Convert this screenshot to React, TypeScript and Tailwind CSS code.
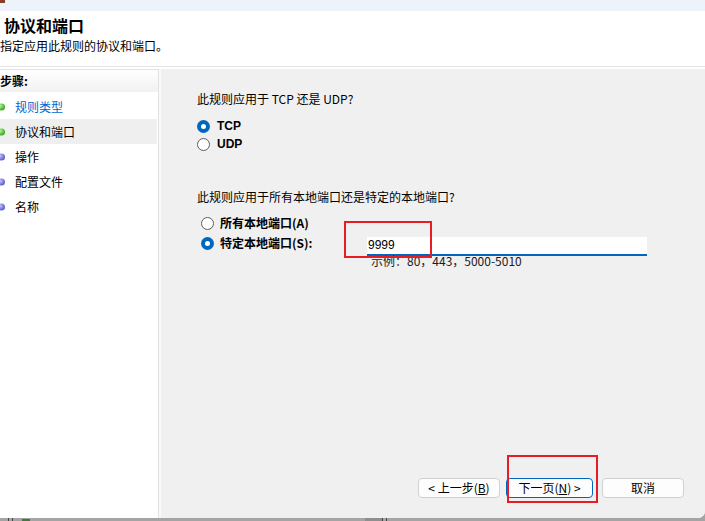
import React from "react";

function Radio({ checked }: { checked?: boolean }) {
  return checked ? (
    <span className="flex h-[13px] w-[13px] shrink-0 items-center justify-center rounded-full bg-[#0067c0]">
      <span className="h-[5px] w-[5px] rounded-full bg-white" />
    </span>
  ) : (
    <span className="h-[13px] w-[13px] shrink-0 rounded-full border border-[#5d5d5d] bg-white" />
  );
}

function Bullet({ done }: { done?: boolean }) {
  return (
    <span
      className={
        "absolute left-[-2px] top-1/2 h-[7px] w-[7px] -translate-y-1/2 rounded-full " +
        (done
          ? "bg-[radial-gradient(circle_at_35%_35%,#b8f0a0,#47b42c_60%,#2f8a1c)]"
          : "bg-[radial-gradient(circle_at_35%_35%,#c4c4f4,#6a6ad6_60%,#4a4aa8)]")
      }
    />
  );
}

const steps = [
  { label: "规则类型", done: true, link: true },
  { label: "协议和端口", done: true, active: true },
  { label: "操作" },
  { label: "配置文件" },
  { label: "名称" },
];

export default function App() {
  return (
    <div className="relative h-[521px] w-[705px] overflow-hidden bg-[#a4a4a4] font-['Noto_Sans_CJK_SC',sans-serif] text-[12px] text-black">
      {/* taskbar fragments under the window edge */}
      <div className="absolute bottom-0 left-[8px] h-[3px] w-px bg-[#444]" />
      <div className="absolute bottom-0 left-[12px] h-[3px] w-px bg-[#444]" />
      <div className="absolute bottom-0 left-[22px] h-[2px] w-[8px] bg-[#3f7a3a]" />
      <div className="absolute bottom-0 left-[365px] h-[3px] w-[17px] bg-[#8f8f8f]" />
      <div className="absolute bottom-0 left-[382px] h-[3px] w-px bg-[#444]" />
      <div className="absolute bottom-0 left-[386px] h-[3px] w-px bg-[#444]" />

      <div className="flex h-[518px] w-[705px] flex-col overflow-hidden rounded-br-[7px] bg-white">
        {/* title bar strip */}
        <div className="relative h-[11px] shrink-0 bg-[#eef2fb]">
          <div className="absolute left-0 top-0 h-[3px] w-[5px] bg-[#8a3b2a]" />
        </div>

        {/* header */}
        <div className="h-[55px] shrink-0 bg-white">
          <div className="mt-[4px] pl-[4px] text-[16px] font-bold leading-[20px]">协议和端口</div>
          <div className="mt-[4px] leading-[14px]">指定应用此规则的协议和端口。</div>
        </div>
        <div className="h-px shrink-0 bg-[#e3e3e3]" />
        <div className="h-[2px] shrink-0 bg-white" />

        {/* body */}
        <div className="flex min-h-0 flex-1">
          {/* steps list */}
          <div className="w-[159px] shrink-0 border-r border-t border-[#e2e2e2] bg-white">
            <div className="h-[22px] bg-gradient-to-b from-white to-[#f1f1f1] font-bold leading-[22px]">步骤:</div>
            <div className="mt-[2px]">
              {steps.map((s) => (
                <div
                  key={s.label}
                  className={
                    "relative h-[25px] w-[157px] pl-[15px] leading-[25px] " +
                    (s.active ? "bg-[#efefef]" : "") +
                    (s.link ? " text-[#0066cc]" : "")
                  }
                >
                  <Bullet done={s.done} />
                  {s.label}
                </div>
              ))}
            </div>
          </div>
          <div className="w-[2px] shrink-0 bg-[#f9f9f9]" />

          {/* form pane */}
          <div className="relative flex flex-1 flex-col bg-[#f0f0f0] pl-[36px]">
            <div className="mt-[22px] h-[16px] leading-[16px]">此规则应用于 TCP 还是 UDP?</div>
            <div className="mt-[10px] flex h-[18px] items-center gap-[7px]">
              <Radio checked />
              <span className="font-['Liberation_Sans',sans-serif] font-bold">TCP</span>
            </div>
            <div className="flex h-[18px] items-center gap-[7px]">
              <Radio />
              <span className="font-['Liberation_Sans',sans-serif] font-bold">UDP</span>
            </div>

            <div className="mt-[36px] leading-[16px]">此规则应用于所有本地端口还是特定的本地端口?</div>
            <div className="mt-[8px] flex h-[20px] items-center gap-[6px] pl-[4px]">
              <Radio />
              <span className="font-bold">所有本地端口(A)</span>
            </div>
            <div className="flex items-start pl-[4px]">
              <div className="flex h-[20px] w-[166px] items-center gap-[6px]">
                <Radio checked />
                <span className="font-bold">特定本地端口(S):</span>
              </div>
              <div className="mt-[4px] flex flex-col">
                <div className="h-[19px] w-[280px] border-b-2 border-[#0067c0] bg-white pl-[1px] font-['Liberation_Sans',sans-serif] text-[12px] leading-[16px]">
                  9999
                </div>
                <div className="-mt-[2px] pl-[4px] leading-[14px] text-[#1a1a1a]">示例：80，443，5000-5010</div>
              </div>
            </div>

            {/* wizard buttons */}
            <div className="mb-[20px] mr-[21px] mt-auto flex justify-end">
              <button className="h-[20px] w-[82px] rounded-[4px] border border-[#d0d0d0] bg-[#fdfdfd] text-[12px] leading-[18px]">
                &lt; 上一步(<span className="underline">B</span>)
              </button>
              <button className="ml-[6px] h-[20px] w-[87px] rounded-[4px] border border-[#0067c0] bg-[#fdfdfd] text-[12px] leading-[18px]">
                下一页(<span className="underline">N</span>) &gt;
              </button>
              <button className="ml-[9px] h-[20px] w-[82px] rounded-[4px] border border-[#d0d0d0] bg-[#fdfdfd] text-[12px] leading-[18px]">
                取消
              </button>
            </div>

            {/* red markup boxes */}
            <div className="pointer-events-none absolute left-[183px] top-[152px] h-[37px] w-[88px] border-2 border-[#e81c24]" />
            <div className="pointer-events-none absolute left-[346px] top-[386px] h-[48px] w-[91px] border-2 border-[#e81c24]" />
          </div>
        </div>
      </div>
    </div>
  );
}
